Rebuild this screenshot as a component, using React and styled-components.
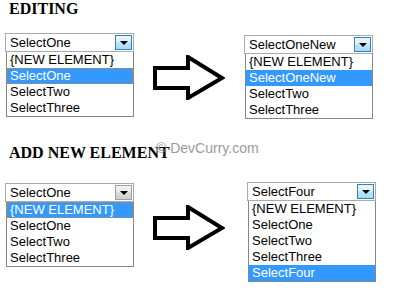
import React from 'react';
import styled, { createGlobalStyle } from 'styled-components';

const GlobalStyle = createGlobalStyle`
  html, body {
    margin: 0;
    padding: 0;
    background: #fff;
  }
`;

const Page = styled.div`
  position: relative;
  width: 410px;
  height: 297px;
  overflow: hidden;
  font-family: 'Liberation Sans', Arial, sans-serif;
`;

const Section = styled.section`
  padding-top: ${(p) => p.top || 0}px;
`;

const Heading = styled.h2`
  margin: 0 0 0 9px;
  font-family: 'Liberation Serif', 'Times New Roman', serif;
  font-size: 16px;
  font-weight: bold;
  line-height: 18px;
  color: #000;
`;

const Row = styled.div`
  display: flex;
  align-items: flex-start;
  margin-top: ${(p) => p.gap}px;
  padding-left: 5px;
`;

const Combo = styled.div`
  display: flex;
  flex-direction: column;
  width: 129px;
  margin-top: ${(p) => p.shift || 0}px;
  margin-left: ${(p) => p.left || 0}px;
`;

const Field = styled.div`
  display: flex;
  align-items: center;
  justify-content: space-between;
  box-sizing: border-box;
  height: 19px;
  padding: 0 1px 0 4px;
  border: 1px solid #a5acb5;
  font-size: 13px;
  color: #000;
`;

const DropButton = styled.div`
  display: flex;
  align-items: center;
  justify-content: center;
  box-sizing: border-box;
  width: 17px;
  height: 15px;
  border: 1px solid ${(p) => (p.hot ? '#3c7fb1' : '#a0a0a0')};
  background: ${(p) =>
    p.hot
      ? 'linear-gradient(#eaf6fd, #d9f0fc 45%, #bee6fd 50%, #a7d9f5)'
      : 'linear-gradient(#f2f2f2, #ebebeb 45%, #dddddd 50%, #cfcfcf)'};
`;

const Caret = styled.span`
  width: 0;
  height: 0;
  border-left: 4px solid transparent;
  border-right: 4px solid transparent;
  border-top: 4px solid #000;
  margin-top: 1px;
`;

const List = styled.ul`
  list-style: none;
  margin: 0 0 0 1px;
  padding: 0;
  border: 1px solid #828790;
  border-top: none;
`;

const Item = styled.li`
  box-sizing: border-box;
  height: 16px;
  line-height: 16px;
  padding-left: 3px;
  font-size: 13px;
  white-space: nowrap;
  color: ${(p) => (p.selected ? '#fff' : '#000')};
  background: ${(p) => (p.selected ? '#3399ff' : 'transparent')};
  outline: ${(p) => (p.focus ? '1px dotted #c8843c' : 'none')};
  outline-offset: -1px;
`;

const ArrowBox = styled.div`
  margin: 22px 0 0 19px;
  width: 72px;
  height: 45px;
`;

const Watermark = styled.div`
  position: absolute;
  left: 156px;
  top: 140px;
  font-size: 14px;
  line-height: 16px;
  color: #9b9b9b;
  white-space: nowrap;
`;

const Arrow = () => (
  <ArrowBox>
    <svg width="72" height="45" viewBox="0 0 72 45">
      <polygon
        points="2,13 35,13 35,2 69,23 35,43 35,33 2,33"
        fill="#fff"
        stroke="#000"
        strokeWidth="4"
        strokeLinejoin="miter"
      />
    </svg>
  </ArrowBox>
);

const Dropdown = ({ value, items, selected, focus, hot, shift, left }) => (
  <Combo shift={shift} left={left}>
    <Field>
      {value}
      <DropButton hot={hot}>
        <Caret />
      </DropButton>
    </Field>
    <List>
      {items.map((item) => (
        <Item key={item} selected={item === selected} focus={focus && item === selected}>
          {item}
        </Item>
      ))}
    </List>
  </Combo>
);

const App = () => {
  return (
    <Page>
      <GlobalStyle />
      <Section>
        <Heading>EDITING</Heading>
        <Row gap={15}>
          <Dropdown
            value="SelectOne"
            items={['{NEW ELEMENT}', 'SelectOne', 'SelectTwo', 'SelectThree']}
            selected="SelectOne"
            focus
            hot
          />
          <Arrow />
          <Dropdown
            value="SelectOneNew"
            items={['{NEW ELEMENT}', 'SelectOneNew', 'SelectTwo', 'SelectThree']}
            selected="SelectOneNew"
            hot
            shift={2}
            left={19}
          />
        </Row>
      </Section>
      <Section top={25}>
        <Heading>ADD NEW ELEMENT</Heading>
        <Row gap={21}>
          <Dropdown
            value="SelectOne"
            items={['{NEW ELEMENT}', 'SelectOne', 'SelectTwo', 'SelectThree']}
            selected="{NEW ELEMENT}"
            focus
          />
          <Arrow />
          <Dropdown
            value="SelectFour"
            items={['{NEW ELEMENT}', 'SelectOne', 'SelectTwo', 'SelectThree', 'SelectFour']}
            selected="SelectFour"
            hot
            shift={-1}
            left={22}
          />
        </Row>
      </Section>
      <Watermark>© DevCurry.com</Watermark>
    </Page>
  );
};

export default App;
